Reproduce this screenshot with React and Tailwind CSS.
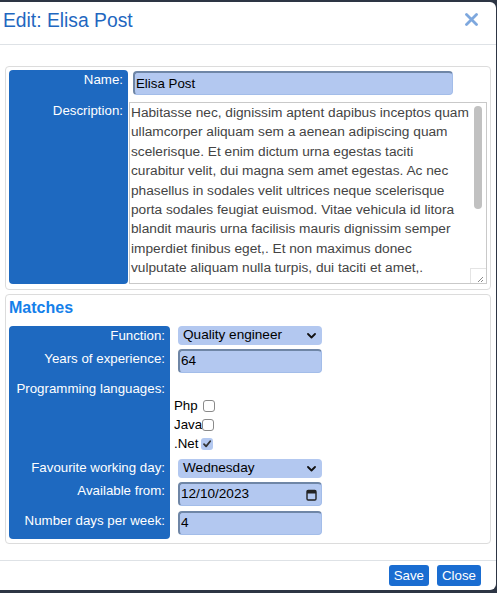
import React from "react";

const font = { fontFamily: '"Liberation Sans", Arial, Helvetica, sans-serif' };

const lines = [
  "Habitasse nec, dignissim aptent dapibus inceptos quam",
  "ullamcorper aliquam sem a aenean adipiscing quam",
  "scelerisque. Et enim dictum urna egestas taciti",
  "curabitur velit, dui magna sem amet egestas. Ac nec",
  "phasellus in sodales velit ultrices neque scelerisque",
  "porta sodales feugiat euismod. Vitae vehicula id litora",
  "blandit mauris urna facilisis mauris dignissim semper",
  "imperdiet finibus eget,. Et non maximus donec",
  "vulputate aliquam nulla turpis, dui taciti et amet,.",
];

function Chevron() {
  return (
    <svg width="9" height="6" viewBox="0 0 9 6" className="shrink-0">
      <path d="M1 1 L4.5 4.5 L8 1" fill="none" stroke="#111" strokeWidth="1.8" strokeLinecap="round" strokeLinejoin="round" />
    </svg>
  );
}

function Select({ value }) {
  return (
    <div className="w-[144px] h-[19px] rounded-[4px] bg-[#b3c8f0] flex items-center justify-between pl-[5px] pr-[6px] text-[13.6px] text-black">
      <span>{value}</span>
      <Chevron />
    </div>
  );
}

function Input({ value, w = "w-[144px]", children }) {
  return (
    <div
      className={`${w} h-[24px] rounded-[4px] bg-[#b3c8f0] border-t-2 border-l-2 border-b border-r border-t-[#6f86a6] border-l-[#6f86a6] border-b-[#a3bde9] border-r-[#a3bde9] flex items-center justify-between pl-[1px] pr-[4px] text-[13.6px] text-black`}
    >
      <span>{value}</span>
      {children}
    </div>
  );
}

function Checkbox({ checked }) {
  if (checked) {
    return (
      <span className="inline-flex w-[12px] h-[12px] rounded-[3px] bg-[#b3c8f0] items-center justify-center">
        <svg width="10" height="10" viewBox="0 0 10 10">
          <path d="M2 5.2 L4.1 7.4 L8.2 2.2" fill="none" stroke="#333" strokeWidth="1.8" strokeLinecap="round" strokeLinejoin="round" />
        </svg>
      </span>
    );
  }
  return <span className="inline-block w-[12px] h-[12px] rounded-[3px] bg-white border border-[#8a8a8a]" />;
}

export default function App() {
  const lbl = "text-white text-right pr-[5px] text-[13.3px] leading-[16px] bg-[#1e69c0]";
  return (
    <div className="w-[497px] h-[593px] bg-[#2d3544] pt-[2px] overflow-hidden" style={font}>
      <div className="w-[496px] h-[588px] bg-white rounded-tr-[6px] rounded-br-[6px] flex flex-col">
        {/* header */}
        <div className="h-[42px] border-b border-[#dee2e6] flex items-start justify-between pl-[3px] pr-[18px] box-content">
          <div className="mt-[7px] text-[19.3px] leading-[24px] text-[#1f67c0]">Edit: Elisa Post</div>
          <svg width="13" height="13" viewBox="0 0 13 13" className="mt-[11px]">
            <path d="M1.5 1.5 L11.5 11.5 M11.5 1.5 L1.5 11.5" stroke="#7ea8de" strokeWidth="2.8" strokeLinecap="round" />
          </svg>
        </div>

        {/* body */}
        <div className="flex-1 pt-[21px] pl-[5px] pr-[5px]">
          {/* first fieldset */}
          <div className="border border-[#dcdcdc] rounded-[4px] pt-[3px] pl-[3px] pr-[3px] pb-[5px]">
            <div className="grid grid-cols-[119px_1fr]">
              <div className={`${lbl} rounded-t-[4px] pt-[2px] h-[32px]`}>Name:</div>
              <div className="pt-[1px] pl-[5px]">
                <div className="w-[320px] h-[24px] rounded-[4px] bg-[#b3c8f0] border-t-2 border-l-2 border-b border-r border-t-[#6f86a6] border-l-[#6f86a6] border-b-[#a3bde9] border-r-[#a3bde9] flex items-center pl-[1px] text-[13.3px] text-black">
                  Elisa Post
                </div>
              </div>
              <div className={`${lbl} rounded-b-[4px] pt-[1px] h-[182px]`}>Description:</div>
              <div className="pl-[1px]">
                <div className="relative h-[182px] border border-[#c9c9c9] bg-white overflow-hidden">
                  <div className="pl-[1px] text-[13.7px] leading-[19.4px] text-[#444] whitespace-nowrap">
                    {lines.map((l, i) => (
                      <div key={i}>{l}</div>
                    ))}
                  </div>
                  <div className="absolute right-[4px] top-[3px] w-[8px] h-[103px] rounded-full bg-[#c1c1c1]" />
                  <div className="absolute right-0 bottom-0 w-[16px] h-[15px] border-l border-t border-[#e4e4e4] bg-white">
                    <svg width="15" height="14" viewBox="0 0 15 14" className="absolute left-0 top-0">
                      <path d="M12 8 L7 13 M12 11 L10 13" stroke="#8a8a8a" strokeWidth="1" />
                    </svg>
                  </div>
                </div>
              </div>
            </div>
          </div>

          {/* second fieldset */}
          <div className="mt-[4px] border border-[#dcdcdc] rounded-[4px] pt-[3px] pl-[3px] pr-[3px] pb-[4px]">
            <div className="h-[20px] leading-[20px] text-[16px] font-bold text-[#1480ea] mb-[8px]">Matches</div>
            <div className="grid grid-cols-[161px_1fr] gap-x-[8px]">
              <div className={`${lbl} rounded-t-[4px] pt-[2px] h-[23px]`}>Function:</div>
              <div>
                <Select value="Quality engineer" />
              </div>

              <div className={`${lbl} pt-[2px] h-[28px]`}>Years of experience:</div>
              <div>
                <Input value="64" />
              </div>

              <div className={`${lbl} pt-[4px] h-[82px]`}>Programming languages:</div>
              <div className="pt-[19px] ml-[-4px] text-[13.3px] leading-[19px] text-black">
                <div className="flex items-center">
                  <span>Php</span>
                  <span className="ml-[5px] flex"><Checkbox /></span>
                </div>
                <div className="flex items-center">
                  <span>Java</span>
                  <span className="flex"><Checkbox /></span>
                </div>
                <div className="flex items-center">
                  <span>.Net</span>
                  <span className="ml-[3px] flex"><Checkbox checked /></span>
                </div>
              </div>

              <div className={`${lbl} pt-[1px] h-[23px]`}>Favourite working day:</div>
              <div>
                <Select value="Wednesday" />
              </div>

              <div className={`${lbl} pt-[1px] h-[29px]`}>Available from:</div>
              <div>
                <Input value="12/10/2023">
                  <svg width="11" height="12" viewBox="0 0 11 12">
                    <rect x="1" y="1.5" width="9" height="9.5" rx="1.2" fill="none" stroke="#222" strokeWidth="1.4" />
                    <rect x="1" y="1.5" width="9" height="3" fill="#222" />
                  </svg>
                </Input>
              </div>

              <div className={`${lbl} rounded-b-[4px] pt-[2px] h-[28px]`}>Number days per week:</div>
              <div>
                <Input value="4" />
              </div>
            </div>
          </div>
        </div>

        {/* footer */}
        <div className="border-t border-[#dee2e6] h-[30px] flex items-start justify-end gap-[8px] pt-[4px] pr-[15px]">
          <button className="h-[21px] px-[5px] rounded-[3px] bg-[#1a6dd1] text-white text-[13.3px] leading-[21px]">Save</button>
          <button className="h-[21px] px-[5px] rounded-[3px] bg-[#1a6dd1] text-white text-[13.3px] leading-[21px]">Close</button>
        </div>
      </div>
    </div>
  );
}
